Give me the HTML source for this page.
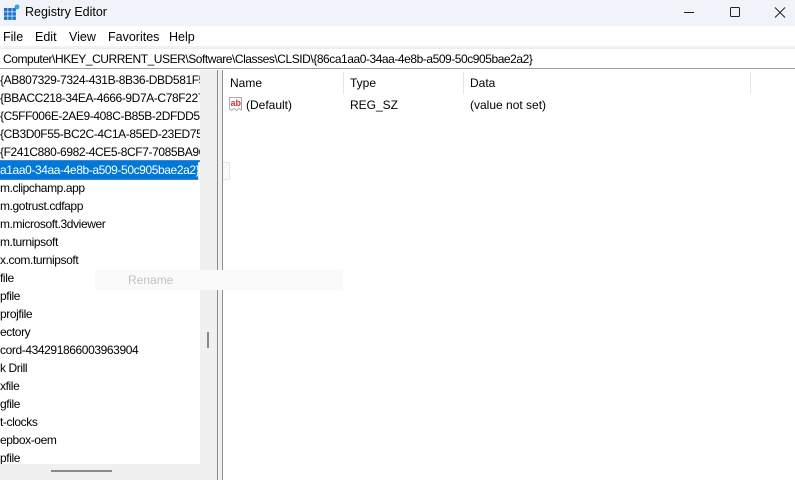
<!DOCTYPE html>
<html><head><meta charset="utf-8"><style>
*{margin:0;padding:0;box-sizing:border-box}
body{width:795px;height:480px;overflow:hidden;background:#fff;font-family:"Liberation Sans",sans-serif;font-size:12px;color:#000;position:relative}
.abs{position:absolute}
.title{left:0;top:0;width:795px;height:26px;background:#f0f3f9}
.menu{left:0;top:26px;width:795px;height:20px;background:#fff}
.menu span{position:absolute;top:4px;font-size:12.5px}
.addr{left:0;top:48px;width:795px;height:21px;background:#fff;border-top:1px solid #ececec;border-bottom:1px solid #a0a0a0}
.tree{left:0;top:70px;width:200px;height:394px;background:#fff;overflow:hidden;padding-top:1px}
.tree div{height:18px;line-height:18px;white-space:nowrap;font-size:12px;letter-spacing:-0.4px}
.sel{background:#0078d7;color:#fff;display:inline-block;outline:1px solid #3a86d8}
</style></head><body>
<div class="abs title"></div>
<svg class="abs" style="left:4px;top:4px" width="16" height="16" viewBox="0 0 16 16">
<g fill="#1a73c8"><rect x="0" y="4" width="3.5" height="3.5"/><rect x="4.2" y="4" width="3.5" height="3.5"/><rect x="8.4" y="4" width="3.5" height="3.5"/><rect x="0" y="8.2" width="3.5" height="3.5"/><rect x="4.2" y="8.2" width="3.5" height="3.5"/><rect x="8.4" y="8.2" width="3.5" height="3.5"/><rect x="0" y="12.4" width="3.5" height="3.5"/><rect x="4.2" y="12.4" width="3.5" height="3.5"/><rect x="8.4" y="12.4" width="3.5" height="3.5"/></g>
<circle cx="13" cy="3" r="2.5" fill="#3aa0e8"/></svg>
<div class="abs" style="left:25px;top:5px;font-size:12.5px">Registry Editor</div>
<svg class="abs" style="left:680px;top:6px" width="110" height="14">
<line x1="4" y1="6.5" x2="14" y2="6.5" stroke="#222" stroke-width="1"/>
<rect x="50.5" y="1.5" width="9" height="9" rx="1" fill="none" stroke="#222"/>
<path d="M95 1.5L105 11.5M105 1.5L95 11.5" stroke="#222" stroke-width="1"/></svg>
<div class="abs menu"><span style="left:3px">File</span><span style="left:35px">Edit</span><span style="left:69px">View</span><span style="left:108px">Favorites</span><span style="left:169px">Help</span></div>
<div class="abs" style="left:0;top:46px;width:795px;height:2px;background:#f2f2f2"></div>
<div class="abs addr"><span style="position:absolute;left:3px;top:3px;font-size:12px;letter-spacing:-0.45px">Computer\HKEY_CURRENT_USER\Software\Classes\CLSID\{86ca1aa0-34aa-4e8b-a509-50c905bae2a2}</span></div>
<div class="abs tree">
<div>{AB807329-7324-431B-8B36-DBD581F5</div>
<div>{BBACC218-34EA-4666-9D7A-C78F227</div>
<div>{C5FF006E-2AE9-408C-B85B-2DFDD54</div>
<div>{CB3D0F55-BC2C-4C1A-85ED-23ED75</div>
<div>{F241C880-6982-4CE5-8CF7-7085BA96</div>
<div><span class="sel">a1aa0-34aa-4e8b-a509-50c905bae2a2}</span></div>
<div>m.clipchamp.app</div>
<div>m.gotrust.cdfapp</div>
<div>m.microsoft.3dviewer</div>
<div>m.turnipsoft</div>
<div>x.com.turnipsoft</div>
<div>file</div>
<div>pfile</div>
<div>projfile</div>
<div>ectory</div>
<div>cord-434291866003963904</div>
<div>k Drill</div>
<div>xfile</div>
<div>gfile</div>
<div>t-clocks</div>
<div>epbox-oem</div>
<div>pfile</div>
</div>
<div class="abs" style="left:198px;top:162px;width:32px;height:18px;border:1px solid #e4e4e4;background:#fafafa;color:#ccc;line-height:16px;font-size:11.4px">2a2}</div>
<div class="abs" style="left:200px;top:70px;width:17px;height:410px;background:#f0f0f0"></div>
<div class="abs" style="left:207px;top:332px;width:2px;height:16px;background:#8a8a8a"></div>
<div class="abs" style="left:0;top:464px;width:200px;height:16px;background:#f0f0f0"></div>
<div class="abs" style="left:51px;top:470px;width:61px;height:2px;background:#8a8a8a"></div>
<div class="abs" style="left:217px;top:70px;width:1px;height:410px;background:#8c8c8c"></div>
<div class="abs" style="left:218px;top:70px;width:4px;height:410px;background:#f0f0f0"></div>
<div class="abs" style="left:222px;top:70px;width:1px;height:410px;background:#8c8c8c"></div>
<div class="abs" style="left:95px;top:270px;width:248px;height:20px;background:#fafafa;color:#c8c0c0;font-size:12px;line-height:20px;padding-left:33px">Rename</div>
<div class="abs" style="left:230px;top:76px">Name</div>
<div class="abs" style="left:343px;top:72px;width:1px;height:22px;background:#e5e5e5"></div>
<div class="abs" style="left:350px;top:76px">Type</div>
<div class="abs" style="left:463px;top:72px;width:1px;height:22px;background:#e5e5e5"></div>
<div class="abs" style="left:470px;top:76px">Data</div>
<div class="abs" style="left:750px;top:72px;width:1px;height:22px;background:#e5e5e5"></div>
<svg class="abs" style="left:228px;top:96px" width="16" height="16" viewBox="0 0 16 16">
<path d="M1.5 1.5H13.5V14L11 12.5 8.5 14.5 6 12.5 3.5 14.5 1.5 13Z" fill="#fff" stroke="#aaa"/>
<text x="2.5" y="10" font-family="Liberation Sans" font-size="9" font-weight="bold" fill="#d33">ab</text></svg>
<div class="abs" style="left:246px;top:98px">(Default)</div>
<div class="abs" style="left:350px;top:98px">REG_SZ</div>
<div class="abs" style="left:470px;top:98px">(value not set)</div>
</body></html>
